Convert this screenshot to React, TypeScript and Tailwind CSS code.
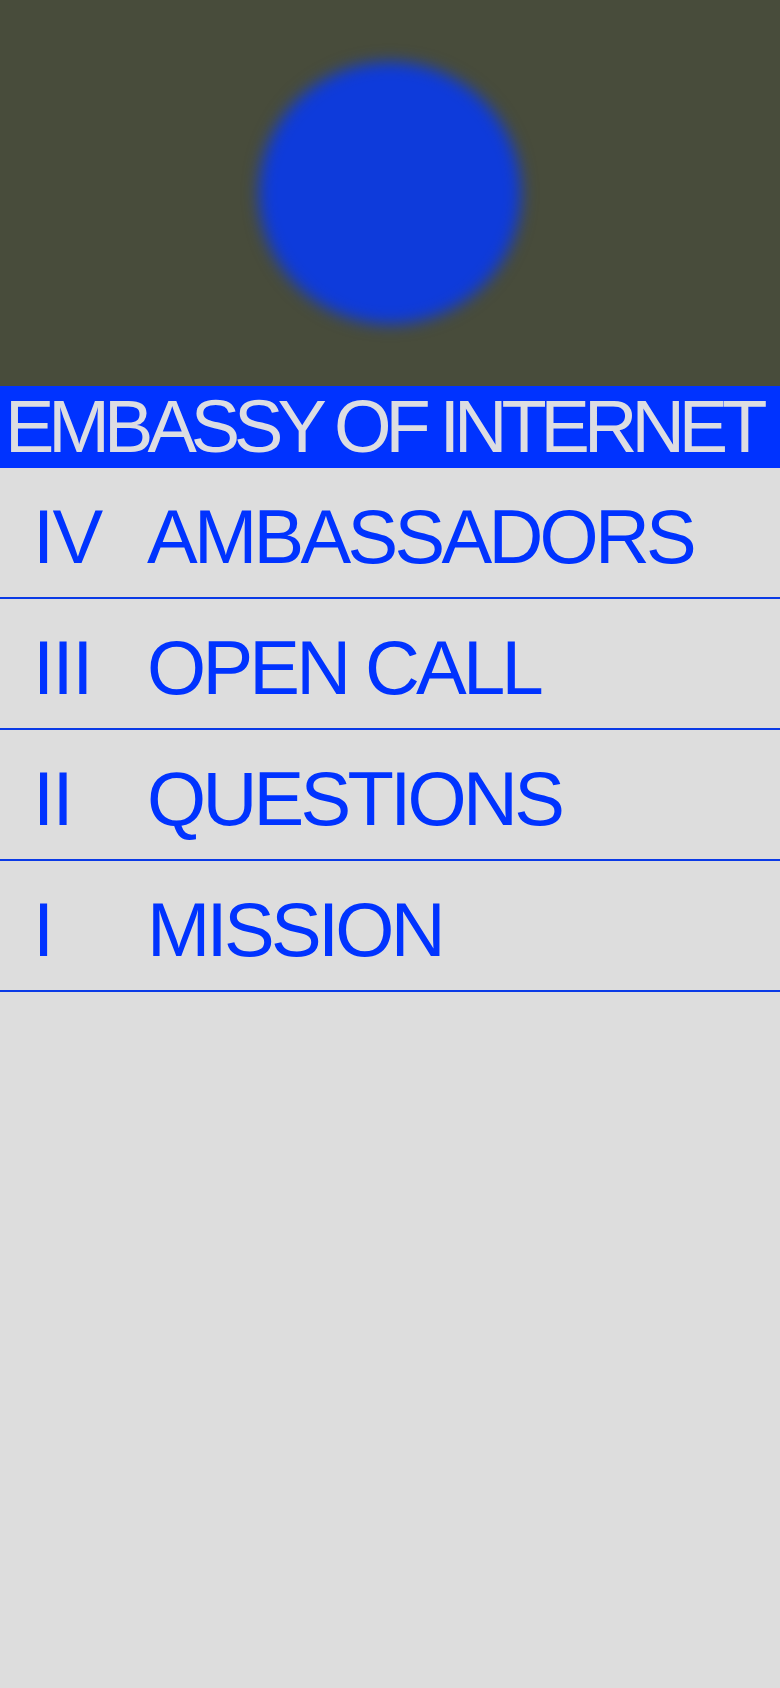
import React from 'react';

const items = [
  { num: 'IV', label: 'AMBASSADORS' },
  { num: 'III', label: 'OPEN CALL' },
  { num: 'II', label: 'QUESTIONS' },
  { num: 'I', label: 'MISSION' },
];

const App: React.FC = () => {
  return (
    <div className="min-h-screen bg-[#dddddd] font-['Liberation_Sans',Arial,sans-serif]">
      {/* Hero */}
      <div className="h-[386px] bg-[#484c3b] flex items-center justify-center overflow-hidden">
        <div className="w-[262px] h-[262px] rounded-full bg-[#0e3bdb] blur-[8px]" />
      </div>

      {/* Title bar */}
      <div className="h-[82px] bg-[#0033ff] pl-[5px] overflow-hidden">
        <h1 className="text-[74px] leading-[82px] tracking-[-0.081em] text-[#dcdde2] whitespace-nowrap">
          EMBASSY OF INTERNET
        </h1>
      </div>

      {/* Nav */}
      <nav>
        {items.map((item) => (
          <div
            key={item.num}
            className="h-[131px] border-b-2 border-[#0a3ae6] flex items-start pt-[31px] pl-[33px] text-[#0033ff] text-[76px] leading-none"
          >
            <span className="w-[114px] shrink-0 tracking-[-0.02em]">{item.num}</span>
            <span className="tracking-[-0.049em] whitespace-nowrap">{item.label}</span>
          </div>
        ))}
      </nav>
    </div>
  );
};

export default App;
